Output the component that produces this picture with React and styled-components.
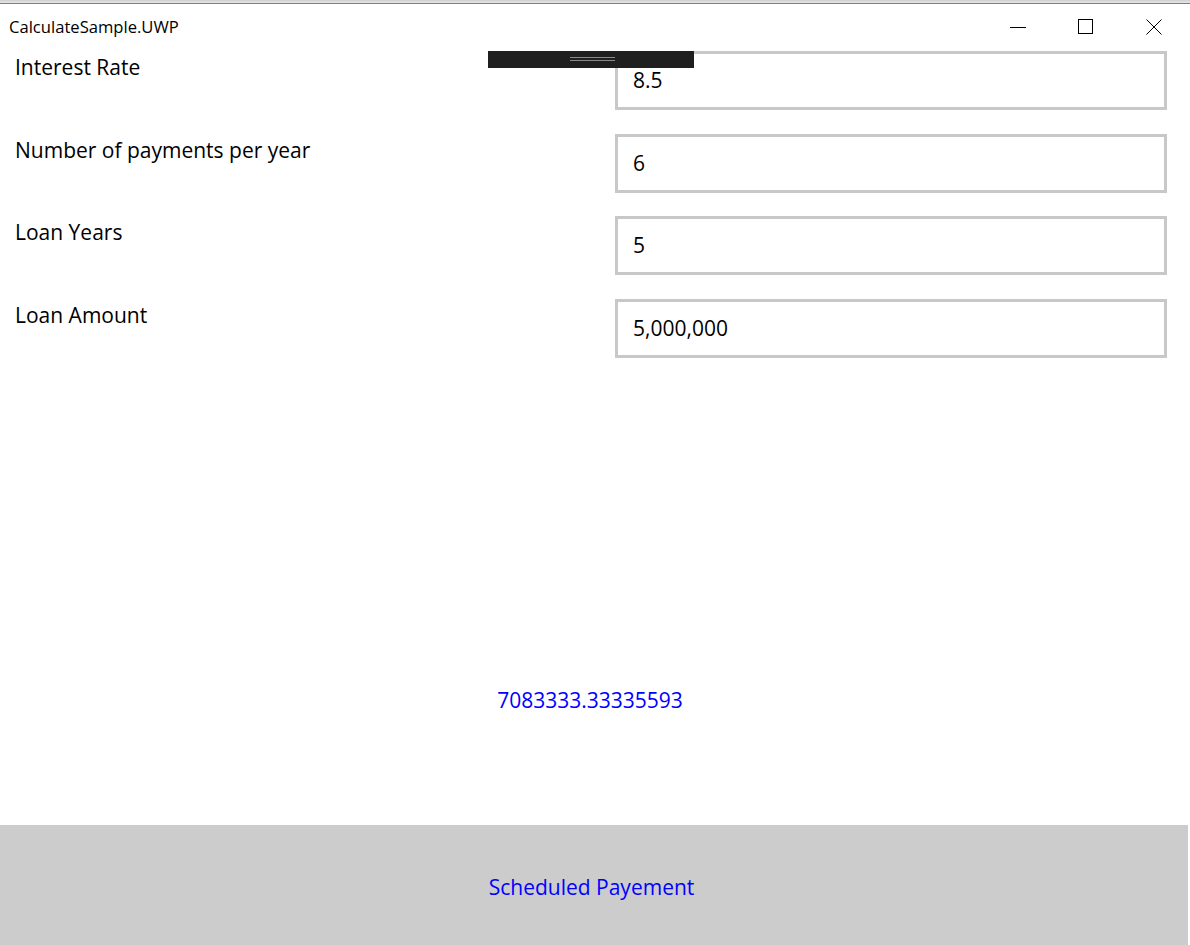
import React from "react";
import styled, { createGlobalStyle } from "styled-components";

const Global = createGlobalStyle`
  html, body { margin: 0; padding: 0; background: #fff; }
  body { font-family: "Open Sans", "Noto Sans", "Liberation Sans", sans-serif; color: #000; }
  * { box-sizing: border-box; }
`;

const Window = styled.div`
  position: relative;
  width: 1190px;
  height: 945px;
  display: flex;
  flex-direction: column;
  padding-right: 2px;
  overflow: hidden;
  background: #fff;
`;

const TopStrip = styled.div`
  height: 4px;
  background: linear-gradient(#cfcfcf, #e6e6e6 70%, #3d8ee0 75%, #3d8ee0);
  margin-right: -2px;
`;

const TitleBar = styled.div`
  height: 47px;
  display: flex;
  align-items: center;
  padding-left: 9px;
`;

const Title = styled.div`
  font-size: 16.6px;
  flex: 1;
  margin-top: -2px;
`;

const Controls = styled.div`
  display: flex;
  align-items: center;
  height: 100%;
`;

const Ctrl = styled.div`
  width: 68px;
  height: 100%;
  display: flex;
  align-items: center;
  justify-content: center;
  margin-top: -1px;
`;

const Form = styled.div`
  display: flex;
  flex-direction: column;
  gap: 23.67px;
`;

const Row = styled.div`
  display: grid;
  grid-template-columns: 615px 552px;
  height: 59px;
`;

const Label = styled.div`
  padding-left: 15px;
  font-size: 21px;
  line-height: 28px;
  padding-top: 2px;
`;

const Field = styled.div`
  border: 3px solid #c8c8c8;
  display: flex;
  align-items: center;
  padding-left: 15px;
  font-size: 21px;
  padding-bottom: 1px;
`;

const Result = styled.div`
  margin-top: 328px;
  text-align: center;
  color: #0000ff;
  font-size: 21px;
  line-height: 28px;
  padding-right: 8px;
`;

const ActionButton = styled.div`
  margin-top: auto;
  height: 120px;
  background: #cccccc;
  display: flex;
  align-items: center;
  justify-content: center;
  color: #0000ff;
  font-size: 21px;
  padding-right: 5px;
  padding-top: 4px;
`;

const DebugBar = styled.div`
  position: absolute;
  left: 488px;
  top: 51px;
  width: 206px;
  height: 17px;
  background: #1f1f1f;
  display: flex;
  justify-content: center;
  align-items: center;
`;

const Grip = styled.div`
  width: 45px;
  height: 4px;
  border-top: 1px solid #8a8a8a;
  border-bottom: 1px solid #8a8a8a;
  margin-left: 3px;
  margin-top: -1px;
`;

const rows = [
  ["Interest Rate", "8.5"],
  ["Number of payments per year", "6"],
  ["Loan Years", "5"],
  ["Loan Amount", "5,000,000"],
];

export default function App() {
  return (
    <>
      <Global />
      <Window>
        <TopStrip />
        <TitleBar>
          <Title>CalculateSample.UWP</Title>
          <Controls>
            <Ctrl>
              <svg width="16" height="16" viewBox="0 0 16 16">
                <line x1="0" y1="8.5" x2="16" y2="8.5" stroke="#000" strokeWidth="1" />
              </svg>
            </Ctrl>
            <Ctrl>
              <svg width="16" height="16" viewBox="0 0 16 16">
                <rect x="0.5" y="0.5" width="14" height="14" fill="none" stroke="#000" strokeWidth="1" />
              </svg>
            </Ctrl>
            <Ctrl>
              <svg width="16" height="16" viewBox="0 0 16 16">
                <path d="M0.5 0.5 L15.5 15.5 M15.5 0.5 L0.5 15.5" stroke="#000" strokeWidth="1" />
              </svg>
            </Ctrl>
          </Controls>
        </TitleBar>
        <Form>
          {rows.map(([l, v]) => (
            <Row key={l}>
              <Label>{l}</Label>
              <Field>{v}</Field>
            </Row>
          ))}
        </Form>
        <Result>7083333.33335593</Result>
        <ActionButton>Scheduled Payement</ActionButton>
        <DebugBar>
          <Grip />
        </DebugBar>
      </Window>
    </>
  );
}
